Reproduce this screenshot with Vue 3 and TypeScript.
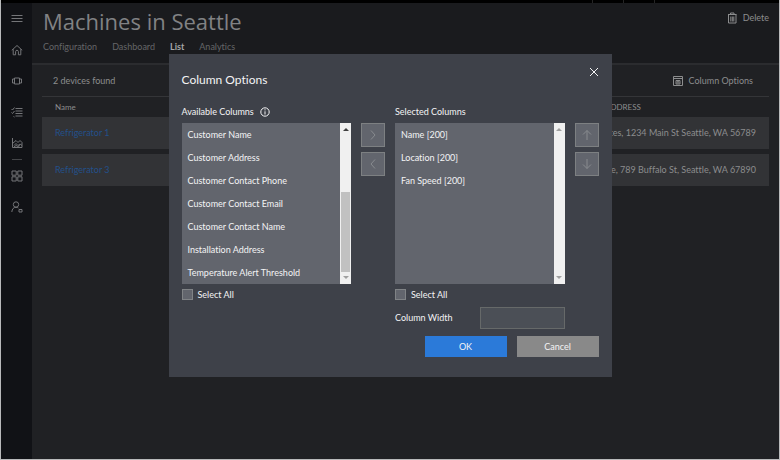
<script setup lang="ts">
import { ref } from 'vue'

interface Machine {
  name: string
  address: string
}

const tabs: string[] = ['Configuration', 'Dashboard', 'List', 'Analytics']
const activeTab = ref('List')

const machines: Machine[] = [
  { name: 'Refrigerator 1', address: 'tes, 1234 Main St Seattle, WA 56789' },
  { name: 'Refrigerator 3', address: 'ee, 789 Buffalo St, Seattle, WA 67890' },
]

const available: string[] = [
  'Customer Name',
  'Customer Address',
  'Customer Contact Phone',
  'Customer Contact Email',
  'Customer Contact Name',
  'Installation Address',
  'Temperature Alert Threshold',
]
const selected: string[] = ['Name [200]', 'Location [200]', 'Fan Speed [200]']

const allAvailable = ref(false)
const allSelected = ref(false)
const columnWidth = ref('')
</script>

<template>
  <div class="frame">
    <div class="topbar"><i></i><i></i><i></i></div>
    <div class="shell">
      <nav class="side">
        <a href="#"><svg viewBox="0 0 12 12"><path d="M.5 2.500h11M.5 5.500h11M.5 8.500h11" /></svg></a>
        <a href="#"><svg viewBox="0 0 12 12"><path d="M.8 6.300 6 1.500l5.200 4.800M2.200 5.200v5.600h2.400V7.600c0-1.800 2.800-1.800 2.800 0v3.200h2.400V5.200" /></svg></a>
        <a href="#"><svg viewBox="0 0 12 12"><path d="M3.500 3h5v6h-5zM3 4H1.500v4H3M9 4h1.500v4H9" /></svg></a>
        <a href="#"><svg viewBox="0 0 12 12"><path d="m.5 3 1 1 2-2.500m-3 5 1 1 2-2.500m-1 5.500 1 .5M4.500 2.500h7M4.500 5h7M4.500 7.500h7M4.500 10h7" /></svg></a>
        <a href="#"><svg viewBox="0 0 12 12"><path d="M1.500 1v9.500h9.500V5.500L9 3.500l-2 2-2-2-3.500 3M3 8.500l2-2 2 2 2-1.500 2 1.500M3 10l2-1.500 2 1 2-1" /></svg></a>
        <hr />
        <a href="#"><svg viewBox="0 0 12 12"><path d="M1 1h4.200v4.200H1zM6.800 1H11v4.200H6.800zM1 6.800h4.200V11H1zM6.800 6.800H11V11H6.800z" /></svg></a>
        <a href="#"><svg viewBox="0 0 12 12"><circle cx="5" cy="3.500" r="2.700" /><path d="M.8 11c.3-3 1.700-4.700 4.200-4.700 1 0 1.800.3 2.400.8M8 8.500h3V11H8z" /></svg></a>
      </nav>
      <main>
        <header>
          <div class="heading">
            <h1>Machines in Seattle</h1>
            <button class="tool" type="button">
              <svg viewBox="0 0 12 12"><path d="M2 2.500h8.500M4.500 2.300V1H8v1.300M2.500 2.500v8.500H10V2.500M4.800 4.500v5M6.300 4.500v5M7.800 4.500v5" /></svg>
              Delete
            </button>
          </div>
          <div class="tabs">
            <a v-for="t in tabs" :key="t" href="#" :class="{ active: t === activeTab }" @click.prevent="activeTab = t">{{ t }}</a>
          </div>
        </header>
        <section class="content">
          <div class="bar">
            <span>2 devices found</span>
            <button class="tool" type="button">
              <svg viewBox="0 0 12 12"><path d="M1.500 1.500h9v9h-9zM1.500 3.500h9M4 5.500h4v3.500H4z" /><circle cx="6" cy="7.200" r="1" /></svg>
              Column Options
            </button>
          </div>
          <table>
            <thead>
              <tr><th>Name</th><th class="addr">ADDRESS</th></tr>
            </thead>
            <tbody>
              <tr v-for="m in machines" :key="m.name">
                <td><a href="#">{{ m.name }}</a></td>
                <td class="addr">{{ m.address }}</td>
              </tr>
            </tbody>
          </table>
        </section>
      </main>
    </div>

    <div class="overlay">
      <div class="dialog" role="dialog" aria-labelledby="dlg-title">
        <div class="dlg-head">
          <h2 id="dlg-title">Column Options</h2>
          <button class="close" type="button" aria-label="Close">
            <svg viewBox="0 0 10 10"><path d="m1 1 8 8M9 1 1 9" /></svg>
          </button>
        </div>
        <div class="picker">
          <div class="label" id="lbl-available">
            Available Columns
            <svg viewBox="0 0 10 10"><circle cx="5" cy="5" r="4.200" /><path d="M5 4.300v3.200M5 2.300v1.100" /></svg>
          </div>
          <div></div>
          <div class="label" id="lbl-selected">Selected Columns</div>
          <div></div>

          <div class="list">
            <ul role="listbox" aria-labelledby="lbl-available">
              <li v-for="c in available" :key="c" role="option">{{ c }}</li>
            </ul>
            <div class="scroll">
              <svg class="dark" viewBox="0 0 6 4"><path d="M0 4h6L3 1z" /></svg>
              <span class="thumb"></span>
              <svg viewBox="0 0 6 4"><path d="M0 0h6L3 3z" /></svg>
            </div>
          </div>
          <div class="moves">
            <button type="button" aria-label="Add"><svg viewBox="0 0 12 12"><path d="m4 1.500 4 4.500-4 4.500" /></svg></button>
            <button type="button" aria-label="Remove"><svg viewBox="0 0 12 12"><path d="M8 1.500 4 6l4 4.500" /></svg></button>
          </div>
          <div class="list">
            <ul role="listbox" aria-labelledby="lbl-selected">
              <li v-for="c in selected" :key="c" role="option">{{ c }}</li>
            </ul>
            <div class="scroll">
              <svg viewBox="0 0 6 4"><path d="M0 4h6L3 1z" /></svg>
              <svg viewBox="0 0 6 4"><path d="M0 0h6L3 3z" /></svg>
            </div>
          </div>
          <div class="moves">
            <button type="button" aria-label="Move up"><svg viewBox="0 0 12 12"><path d="M6 11V1.500M2 5.500l4-4 4 4" /></svg></button>
            <button type="button" aria-label="Move down"><svg viewBox="0 0 12 12"><path d="M6 1v9.500M2 6.500l4 4 4-4" /></svg></button>
          </div>

          <label class="check"><input v-model="allAvailable" type="checkbox" />Select All</label>
          <div></div>
          <label class="check"><input v-model="allSelected" type="checkbox" />Select All</label>
          <div></div>

          <div class="width">
            <label for="col-width">Column Width</label>
            <input id="col-width" v-model="columnWidth" type="text" />
          </div>
        </div>
        <div class="actions">
          <button class="ok" type="button">OK</button>
          <button type="button">Cancel</button>
        </div>
      </div>
    </div>
  </div>
</template>

<style>
body {
  margin: 0;
  background: #202124;
}
</style>

<style scoped>
* {
  box-sizing: border-box;
}
.frame {
  position: relative;
  display: flex;
  flex-direction: column;
  min-height: 100vh;
  border: 1px solid #b9babb;
  border-top: 0;
  background: #202124;
  color: #8c8d8e;
  font: 9px/12px Lato, 'Open Sans', sans-serif;
  font-variant-ligatures: none;
}
svg {
  display: block;
  flex: none;
  fill: none;
  stroke: currentColor;
}
a {
  color: inherit;
  text-decoration: none;
}
button {
  padding: 0;
  border: 0;
  border-radius: 0;
  background: none;
  color: inherit;
  font: inherit;
}
.topbar {
  display: flex;
  justify-content: flex-end;
  gap: 30px;
  height: 3px;
  padding-right: 124px;
  background: #000;
}
.topbar i {
  width: 1px;
  background: #252525;
}
.shell {
  display: flex;
  flex: 1;
}
.side {
  display: flex;
  flex-direction: column;
  align-items: center;
  gap: 19px;
  width: 31px;
  padding-top: 10px;
  background: #111216;
  color: #747578;
}
.side svg {
  width: 12px;
  height: 12px;
}
.side hr {
  width: 10px;
  margin: -9px 0;
  border: 0;
  border-top: 1px solid #444548;
}
main {
  flex: 1;
  min-width: 0;
}
header {
  height: 62px;
  padding: 4px 10px 0 11px;
  border-bottom: 2px solid #2b2c2f;
  background: #1a1b1e;
}
.heading {
  display: flex;
  justify-content: space-between;
}
h1 {
  margin: 0;
  color: #818284;
  font-family: 'Open Sans', sans-serif;
  font-size: 22px;
  font-weight: 400;
  line-height: 28px;
}
.tool {
  display: flex;
  align-items: center;
  gap: 5px;
  height: 22px;
}
.tool svg {
  width: 12px;
  height: 12px;
}
.tabs {
  display: flex;
  gap: 15px;
  padding-top: 6px;
  color: #656668;
}
.active {
  color: #a5a6a7;
  font-weight: 700;
}
.content {
  padding: 0 10px;
}
.bar {
  display: flex;
  align-items: center;
  justify-content: space-between;
  height: 32px;
  padding: 0 16px 0 11px;
  border-bottom: 1px solid #343538;
}
table {
  width: 100%;
  border-spacing: 0;
}
th {
  height: 20px;
  padding: 0 13px;
  font-size: 8px;
  font-weight: 400;
  text-align: left;
}
th.addr {
  padding-left: 14px;
}
td {
  height: 37px;
  padding: 0 13px;
  border-bottom: 5px solid #202124;
  background: #323336;
}
td a {
  color: #23508a;
}
.addr {
  width: 178px;
  white-space: nowrap;
}
td.addr {
  text-align: right;
}
.overlay {
  position: absolute;
  inset: 0;
  display: flex;
  align-items: flex-start;
  justify-content: center;
  padding-top: 54px;
}
.dialog {
  width: 443px;
  padding: 0 13px 20px;
  background: #3e4149;
  color: #f4f4f5;
}
.dlg-head {
  display: flex;
  align-items: flex-start;
  justify-content: space-between;
}
h2 {
  margin: 0;
  padding-top: 18px;
  font-size: 12px;
  font-weight: 400;
  line-height: 16px;
}
.close {
  padding-top: 13px;
}
.close svg {
  width: 10px;
  height: 10px;
}
.picker {
  display: grid;
  grid-template-columns: 1fr 24px 1fr 24px;
  column-gap: 10px;
  padding-top: 18px;
}
.label {
  display: flex;
  align-items: center;
  gap: 6px;
  height: 17px;
  padding-bottom: 5px;
}
.label svg {
  width: 10px;
  height: 10px;
}
.list {
  display: flex;
  height: 161px;
  background: #62656d;
}
ul {
  flex: 1;
  margin: 0;
  padding: 0 6px;
  list-style: none;
}
li {
  line-height: 23px;
  white-space: nowrap;
}
.scroll {
  display: flex;
  flex-direction: column;
  align-items: center;
  justify-content: space-between;
  width: 11px;
  padding: 4px 1px;
  background: #f0f0f0;
}
.scroll svg {
  width: 6px;
  height: 4px;
  fill: #a0a0a0;
  stroke: none;
}
.scroll .dark {
  fill: #404040;
}
.thumb {
  width: 9px;
  height: 80px;
  margin: auto 0 4px;
  background: #c1c1c1;
}
.moves {
  display: flex;
  flex-direction: column;
  gap: 5px;
}
.moves button {
  display: grid;
  place-items: center;
  height: 24px;
  border: 1px solid #7d8082;
  background: #62656d;
  color: #888b8f;
}
.moves svg {
  width: 12px;
  height: 12px;
}
.check {
  display: flex;
  align-items: center;
  gap: 5px;
  height: 23px;
  padding-bottom: 2px;
}
.check input {
  appearance: none;
  width: 11px;
  height: 11px;
  margin: 0;
  border: 1px solid #808386;
  background: #62656d;
}
.width {
  display: flex;
  grid-column: 3;
  align-items: center;
  justify-content: space-between;
}
.width input {
  width: 85px;
  height: 22px;
  padding: 0 4px;
  border: 1px solid #666969;
  background: #4b4f56;
  color: inherit;
  font: inherit;
}
.actions {
  display: flex;
  justify-content: flex-end;
  gap: 10px;
  padding-top: 7px;
}
.actions button {
  width: 82px;
  height: 21px;
  background: #898989;
}
.actions .ok {
  background: #2b7ad9;
}
</style>
